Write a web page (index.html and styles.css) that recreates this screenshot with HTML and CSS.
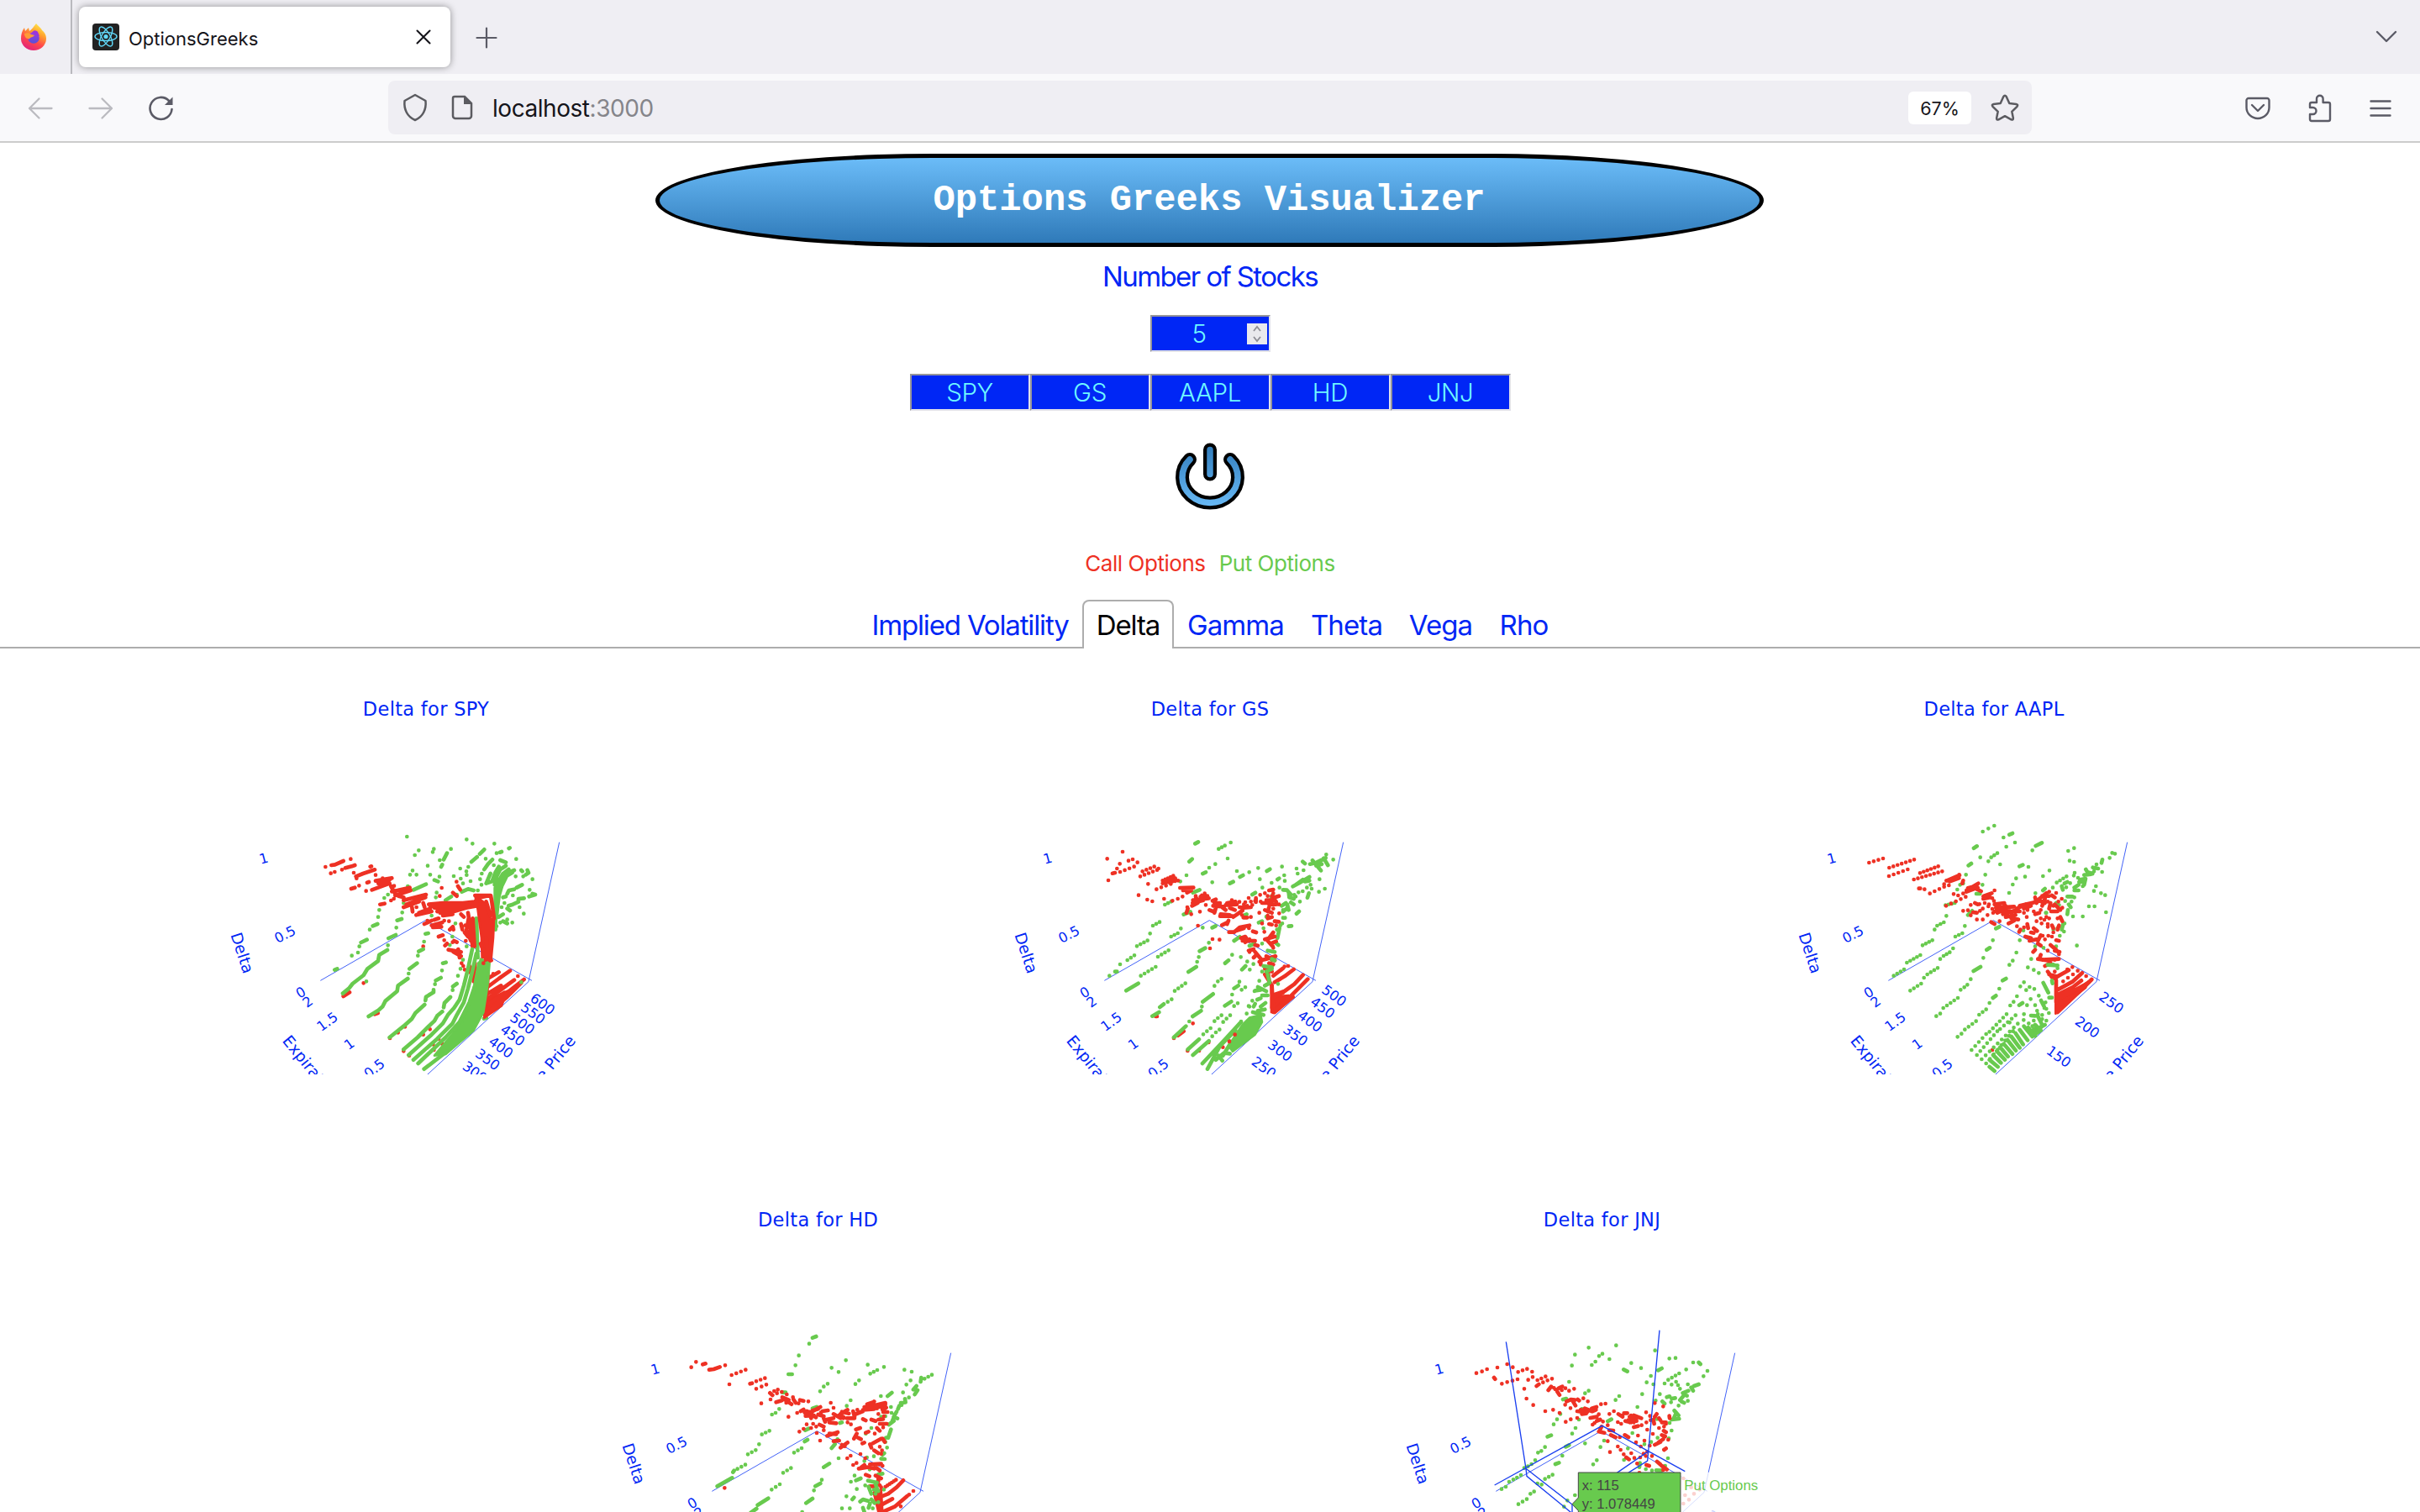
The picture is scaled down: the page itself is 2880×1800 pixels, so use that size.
FILE: index.html
```html
<!DOCTYPE html>
<html lang="en">
<head>
<meta charset="utf-8">
<title>OptionsGreeks</title>
<link rel="stylesheet" href="styles.css">
</head>
<body>
<div class="tabstrip">
  <div class="pinned">
    <svg width="34" height="34" viewBox="0 0 34 34">
      <defs>
        <linearGradient id="fx" x1=".8" y1="0" x2=".3" y2="1"><stop offset="0" stop-color="#fff44f"/><stop offset=".35" stop-color="#ffa02e"/><stop offset=".65" stop-color="#ff4a4a"/><stop offset="1" stop-color="#e0207e"/></linearGradient>
        <linearGradient id="fy" x1="0" y1="0" x2="0" y2="1"><stop offset="0" stop-color="#a03be0"/><stop offset="1" stop-color="#5650d8"/></linearGradient>
      </defs>
      <path fill="url(#fx)" d="M20 1c2 3 6 5 7 8 4 3 5 7 5 10a15 14 0 0 1-30 0c0-5 1-9 4-13l1 4 4-4 1 4c3-2 5-5 8-9z"/>
      <circle cx="17" cy="18" r="6.8" fill="url(#fy)"/>
      <path fill="#ff9a36" d="M6 13c3-1 6-1 8 1l4 1c-1 2-4 2-5 3s-1 2-3 1c-2 0-4-3-4-6z"/>
      <path fill="#9a35dc" d="M15 12c2-4 5-3 7-1l2 5-5-2z"/>
    </svg>
  </div>
  <div class="tab">
    <svg class="favicon" width="32" height="32" viewBox="0 0 32 32"><rect width="32" height="32" rx="4" fill="#222"/><g fill="none" stroke="#61dafb" stroke-width="1.4"><ellipse cx="16" cy="15.500" rx="13" ry="5"/><ellipse cx="16" cy="15.500" rx="13" ry="5" transform="rotate(60 16 15.500)"/><ellipse cx="16" cy="15.500" rx="13" ry="5" transform="rotate(120 16 15.500)"/></g><circle cx="16" cy="15.500" r="2.600" fill="#61dafb"/></svg>
    <span class="tab-title">OptionsGreeks</span>
    <svg width="18" height="18" viewBox="0 0 18 18" fill="none" stroke="#15141a" stroke-width="2" stroke-linecap="round"><path d="M1.500 1.500l15 15M16.500 1.500l-15 15"/></svg>
  </div>
  <svg class="newtab" width="26" height="26" viewBox="0 0 26 26" fill="none" stroke="#5b5b66" stroke-width="2.200" stroke-linecap="round"><path d="M13 1.500v23M1.500 13h23"/></svg>
  <svg class="alltabs" width="28" height="16" viewBox="0 0 28 16" fill="none" stroke="#5b5b66" stroke-width="2.400" stroke-linecap="round" stroke-linejoin="round"><path d="M3 2l11 11L25 2"/></svg>
</div>
<div class="toolbar">
  <div class="nav">
    <svg width="30" height="28" viewBox="0 0 30 28" fill="none" stroke="#bbbbc0" stroke-width="2.300" stroke-linecap="round" stroke-linejoin="round"><path d="M28.500 14H2M13.500 2.500L2 14l11.500 11.500"/></svg>
    <svg width="30" height="28" viewBox="0 0 30 28" fill="none" stroke="#bbbbc0" stroke-width="2.300" stroke-linecap="round" stroke-linejoin="round"><path d="M1.500 14H28M16.500 2.500L28 14 16.500 25.500"/></svg>
    <svg width="30" height="30" viewBox="0 0 30 30" fill="none" stroke="#5b5b66" stroke-width="2.600" stroke-linecap="round"><path d="M27.500 16A13 13 0 1 1 24 6"/><path d="M28.500 1.500v9.500h-9.500z" fill="#5b5b66" stroke="none"/></svg>
  </div>
  <div class="urlbar">
    <svg width="30" height="34" viewBox="0 0 30 34" fill="none" stroke="#5b5b60" stroke-width="2.500" stroke-linejoin="round"><path d="M15 2l12.500 7c1 10-3 19-12.500 23C5.500 28 1.500 19 2.500 9z"/></svg>
    <svg class="doc" width="26" height="30" viewBox="0 0 26 30"><path d="M4 2h12l8 8v15a3 3 0 0 1-3 3H5a3 3 0 0 1-3-3V4a2 2 0 0 1 2-2z" fill="none" stroke="#5b5b60" stroke-width="2.500"/><path d="M15 1.500V11h9.500z" fill="#5b5b60"/></svg>
    <span class="url">localhost<span class="port">:3000</span></span>
    <span class="zoom">67%</span>
    <svg width="34" height="32" viewBox="0 0 34 32" fill="none" stroke="#5b5b60" stroke-width="2.500" stroke-linejoin="round"><path d="M15.300 3q1.700-2.500 3.400 0l3.600 8 8.200 1q2.600.6 1 2.800l-6.200 6 1.600 8q0 2.500-2.400 1.500L17 26.200l-7.500 4.100q-2.400 1-2.400-1.500l1.600-8-6.200-6q-1.600-2.200 1-2.800l8.200-1z"/></svg>
  </div>
  <div class="actions">
    <svg width="30" height="28" viewBox="0 0 30 28" fill="none" stroke="#5b5b66" stroke-width="2.400" stroke-linecap="round" stroke-linejoin="round"><path d="M4 2h22a2.500 2.500 0 0 1 2.500 2.500V13a13.500 13 0 0 1-27 0V4.500A2.500 2.500 0 0 1 4 2z"/><path d="M8 10l7 7 7-7"/></svg>
    <svg width="28" height="34" viewBox="0 0 28 34" fill="none" stroke="#5b5b66" stroke-width="2.400" stroke-linejoin="round"><path d="M2 16v-4q0-2 2-2h6V5.500a3.800 3.800 0 0 1 7.600 0V10h6.400q2 0 2 2v18q0 2-2 2H4q-2 0-2-2v-6h3.500a4 4 0 0 0 0-8z"/></svg>
    <svg width="26" height="22" viewBox="0 0 26 22" stroke="#5b5b66" stroke-width="2.400" stroke-linecap="round"><path d="M1.500 2.500h23M1.500 11h23M1.500 19.500h23"/></svg>
  </div>
</div>

<main>
  <h1>Options Greeks Visualizer</h1>
  <div class="label">Number of Stocks</div>
  <div class="field count"><span>5</span>
    <svg class="spin" width="24" height="25" viewBox="0 0 24 25" fill="none" stroke="#8d8d95" stroke-width="1.800"><path d="M8 9l4-5 4 5M8 16l4 5 4-5"/></svg>
  </div>
  <div class="stocks"><div class="field">SPY</div><div class="field">GS</div><div class="field">AAPL</div><div class="field">HD</div><div class="field">JNJ</div></div>
  <svg class="power" width="84" height="80" viewBox="0 0 84 80" fill="none" stroke-linecap="round">
    <defs><linearGradient id="pw" gradientUnits="userSpaceOnUse" x1="0" y1="0" x2="0" y2="80"><stop offset="0" stop-color="#2f7ab9"/><stop offset="1" stop-color="#6bbcf8"/></linearGradient></defs>
    <path d="M18 20A33 30.500 0 1 0 66 20M42 8.500v29" stroke="#000" stroke-width="16"/>
    <path d="M18 20A33 30.500 0 1 0 66 20M42 8.500v29" stroke="url(#pw)" stroke-width="7.500"/>
  </svg>
  <div class="legend"><span class="call">Call Options</span><span class="put">Put Options</span></div>
  <div class="tabs">
    <span class="t1">Implied Volatility</span><span class="t2 active">Delta</span><span class="t3">Gamma</span><span class="t4">Theta</span><span class="t5">Vega</span><span class="t6">Rho</span>
  </div>
  <div class="charts">
    <figure><figcaption>Delta for SPY</figcaption><svg class="plot" data-stock="SPY" viewBox="0 0 2800 957"></svg></figure>
    <figure><figcaption>Delta for GS</figcaption><svg class="plot" data-stock="GS" viewBox="0 0 2800 957"></svg></figure>
    <figure><figcaption>Delta for AAPL</figcaption><svg class="plot" data-stock="AAPL" viewBox="0 0 2800 957"></svg></figure>
    <figure><figcaption>Delta for HD</figcaption><svg class="plot" data-stock="HD" viewBox="0 0 2800 957"></svg></figure>
    <figure><figcaption>Delta for JNJ</figcaption><svg class="plot" data-stock="JNJ" viewBox="0 0 2800 957"></svg></figure>
  </div>
</main>
<script src="charts.js"></script>
</body>
</html>
```
FILE: styles.css
```css
* { box-sizing: border-box; }
body { margin: 0; width: 2880px; height: 1800px; overflow: hidden; background: #fff; font-family: Inter, "Liberation Sans", sans-serif; color: #0026f5; }
svg { display: block; flex: none; }

.tabstrip { display: flex; align-items: center; height: 88px; background: #efeef3; }
.pinned { width: 86px; height: 88px; padding: 27px 0 0 23px; border-right: 2px solid #b9b9be; }
.tab { display: flex; align-items: center; width: 442px; height: 72px; margin-left: 8px; padding: 0 23px 0 16px; background: #fff; border-radius: 8px; box-shadow: 0 0 8px rgba(0, 0, 0, .4); }
.tab-title { flex: 1; margin-left: 11px; font-size: 22px; color: #15141a; padding-top: 3px; }
.newtab { margin: 2px 0 0 30px; }
.alltabs { margin-left: auto; margin-right: 26px; }

.toolbar { display: flex; align-items: center; height: 82px; padding-top: 2px; background: #f9f9fb; border-bottom: 2px solid #ccc; }
.nav { display: flex; align-items: center; gap: 42px; width: 462px; padding-left: 33px; }
.urlbar { display: flex; align-items: center; width: 1956px; height: 64px; margin-top: -2px; padding: 0 15px 0 17px; border-radius: 8px; background: #efeef3; }
.doc { margin-left: 28px; }
.url { flex: 1; margin-left: 23px; padding-top: 2px; font-size: 28px; letter-spacing: -.45px; color: #15141a; }
.port { color: #85858a; }
.zoom { width: 75px; height: 39px; margin-right: 23px; border-radius: 6px; background: #fff; color: #15141a; font-size: 21.500px; line-height: 41px; text-align: center; }
.actions { display: flex; align-items: center; gap: 45px; margin-left: auto; margin-right: 34px; }

main { display: flex; flex-direction: column; align-items: center; padding-top: 13px; }
h1 { width: 1319px; height: 111px; margin: 0 2px 0 0; border: 5px solid #000; border-radius: 25% / 50%; background: linear-gradient(#6bbcf8, #2f7ab9); color: #fff; font: bold 43.800px/101px "Liberation Mono", monospace; text-align: center; }
.label { height: 40px; margin-top: 15px; font-size: 33px; line-height: 40px; letter-spacing: -1.600px; }
.field { display: flex; align-items: center; justify-content: center; width: 143px; height: 44px; border: 2px solid; border-color: #95959a #e1e1e8 #e1e1e8 #95959a; background: #0026f5; color: #6ff8ff; font-size: 29.500px; font-weight: 350; letter-spacing: -.4px; }
.count { margin-top: 26px; padding-right: 2px; }
.count span { flex: 1; text-align: center; }
.spin { background: #e9e9ed; }
.stocks { display: flex; margin-top: 26px; }
.power { margin-top: 38px; }
.legend { display: flex; gap: 16px; height: 34px; margin-top: 47px; font-size: 26px; line-height: 34px; letter-spacing: -.45px; }
.call { color: #ee3124; }
.put { color: #68ca4e; }
.tabs { display: flex; justify-content: center; width: 100%; height: 58px; margin-top: 26px; border-bottom: 2px solid #adadad; font-size: 33px; line-height: 60px; text-align: center; letter-spacing: -1.150px; white-space: nowrap; }
.tabs span { height: 58px; }
.t1 { width: 267px; }
.t2 { width: 109px; }
.t3 { width: 147px; }
.t4 { width: 117px; }
.t5 { width: 107px; }
.t6 { width: 91px; }
.t3, .t4, .t5, .t6 { letter-spacing: -.9px; }
.active { border: 2px solid #adadad; border-bottom: 0; border-radius: 8px 8px 0 0; background: #fff; color: #000; line-height: 56px; }

.charts { display: flex; flex-wrap: wrap; justify-content: center; width: 2800px; }
figure { width: 933px; height: 608px; margin: 0; }
figcaption { height: 188px; padding-top: 55px; font: 22.500px/34px "DejaVu Sans", sans-serif; letter-spacing: .3px; text-align: center; }
.plot { width: 933.300px; height: 319px; overflow: hidden; }
.plot text { font-family: "DejaVu Sans", sans-serif; fill: #0026f5; }
.tick { font-size: 49px; text-anchor: middle; }
.axis-name { font-size: 56px; }
.axis { fill: none; stroke: #2c50f6; stroke-width: 2.700; }
.spike { fill: none; stroke: #1a3ff0; stroke-width: 4; }
.mark { stroke-width: 14; stroke-linecap: round; stroke-linejoin: round; fill: none; }
.mark-call { stroke: #ee3124; }
.mark-put { stroke: #68ca4e; }
.solid-call { fill: #ee3124; stroke: #ee3124; stroke-width: 8; stroke-linejoin: round; }
.solid-put { fill: #68ca4e; stroke: #68ca4e; stroke-width: 8; stroke-linejoin: round; }
.fade { fill: #fff; opacity: .78; }
.tip { fill: #68ca4e; stroke: #444; stroke-width: 3; }
.plot .tip-text { font: 50px "Liberation Sans", sans-serif; fill: #444; }
.plot .tip-name { font: 50.500px "Liberation Sans", sans-serif; fill: #68ca4e; }
```
FILE: charts.js
```js
// Marks are written as: "x,y" one point, "a-b-c" a dense run, "a:b:n" n evenly spaced points,
// and "#a-b-c" an area that is fully covered with points.
const DATA = {
  SPY: { dx: 628, dy: 0,
    ticks: [["600", 1187, 705], ["550", 1153, 738], ["500", 1115, 775], ["450", 1080, 817], ["400", 1038, 860], ["350", 991, 903], ["300", 945, 948]],
    layers: [
      ["put", `702,108 915,118 936,133 1014,133 859,152 744,157 730,174 798,152 794,163 845,167-833,190 819,192 828,208-824,216 776,212 722,229 713,244 736,244 785,244 818,251 800,263-813,268 892,222 914,232 915,245 869,249 894,258 929,267 902,275 978,154-962,170 952,181-932,198 921,216 1066,150-1069,148 1022,167 1034,164-1040,162 1092,188 983,187 1007,190-992,205-978,225 1012,210 1035,192-1055,200 1030,215-1018,235-1008,262 1000,240-985,275-1005,268 1055,212-1035,225-1022,250-1015,280 1085,228-1065,236-1048,258-1035,290-1028,330-1022,390 1078,236-1058,248-1040,285-1030,320-1020,400 1065,225-1045,240-1030,265-1020,300-1018,340 1018,290-1018,440 969,240 963,260 968,280 1110,228-1114,232 1132,228-1136,237-1126,244 1090,250 1117,250 1150,260 1113,280-1094,290 1085,296-1066,300-1060,312 1140,298 1150,312-1160,315-1138,322 1120,328-1100,330-1100,341-1080,350-1065,355 1045,325-1055,322 1080,318 1104,360 1119,383 1060,365-1070,372 1045,385-1030,395 1060,404 1078,415 1035,415 1022,428 1045,410-1060,418 1050,345 1040,360 770,278-725,298 705,285 940,300-920,295-898,305 880,315 860,322-840,335 808,308 805,325 955,300 634,315 621,327 603,370 599,395 597,420-580,427 569,440 559,476-538,486 532,500 527,522 505,533 453,580-444,584 690,345 685,379 683,402-667,407 664,433 662,459-636,471 634,496 790,390 778,453-768,455 763,483 855,495 875,418 864,465 915,500 985,755-977,758 950,400-955,540`],
      ["call", `411,216 432,210-445,208-475,195 501,188 430,239 444,234 470,226 482,220-505,214-516,210 512,237 571,215-575,214 520,250-545,240-587,226 522,257 590,245 503,294-516,290 531,283 560,272-566,270 556,302 577,298-640,275 590,266-648,256 600,275-640,262 615,257 645,285-660,312 656,284 648,304-668,300-712,290 660,318-715,300 672,320-690,325 606,350-622,347 645,336 655,330 690,335-770,315 700,350-768,325 690,360-745,340 720,360-722,376 735,388-790,375 745,380-785,365 736,360 760,345-765,360 780,350-830,345-940,345-960,325-1000,318 785,357-840,352-950,340 800,362-850,360-960,350 820,372-880,368-950,355 820,380-860,378-920,360 830,390-865,385 810,375-820,350 826,291 879,269 884,285-892,297 866,308-880,320 819,320 764,420-790,408 775,408 790,425-828,415 795,432-825,430 800,405-815,400 852,410 835,408 855,440-866,430-868,440 815,465-830,460 835,478 845,490-838,497 870,480-880,485 912,480 850,512-895,520 868,520-895,535 885,510-890,540 903,570 908,583 897,560 895,420-900,440 910,425 905,395-895,385 908,450-920,465 865,485 920,380-930,440-936,500 937,400-943,500 922,400-915,440-930,480 925,570-930,595 945,560-940,625 #945,318-980,345-1000,400-1013,402-1010,470-1003,545-970,540-968,470-955,370 945,318-1001,318-1005,340-1013,400 985,340-1000,390 985,555-1003,550 991,550-990,620-985,690 1030,592-990,615 1010,598 1070,587-1030,615-990,645 1085,620-1030,660-985,690 1038,640-985,672 1098,606 1120,618-1060,665-985,745 1050,665-990,710 #978,755-975,695-1060,660-1040,712 1110,630-1060,680-1010,722 475,678-497,664 547,631 587,742-598,738 670,808 695,787 641,828 690,874 710,890 784,796 760,815 815,830 795,850 828,848 798,870 760,500`],
      ["put", `632,513-603,530-599,552-561,580-547,603-508,633-495,650-473,668 557,625 760,510-744,518 741,533 738,560-711,580 708,597 705,615-670,640-667,660-625,695-615,715-600,728-565,750 841,557-830,560 827,586 823,612-805,622 802,635 797,655-797,664-770,680-768,693 765,708-732,738-720,758-690,785-640,825 902,548 893,580 884,605 880,633-866,643 865,656 857,681-836,702-833,718 828,733-810,748-800,766-780,785-740,825-690,868 935,510-920,580-905,640-890,690-870,720-848,745-830,775-790,815-708,888 950,525-935,590-920,650-905,700-880,745-865,775-810,830-725,905 960,560-945,640-925,700-890,770-840,825-742,918 #965,545-997,560-990,640-975,735-940,800-840,885-800,890-900,770-930,690 845,875-763,938 1110,628`],
      ["call", `965,490-985,540 995,520-998,550 985,470-990,530 975,560 983,548`]
    ] },
  GS: { dx: 619, dy: 0,
    ticks: [["500", 1214, 675], ["450", 1173, 718], ["400", 1128, 767], ["350", 1076, 817], ["300", 1021, 872], ["250", 963, 932]],
    layers: [
      ["put", `726,133-737,127 810,152:832,140:3 853,129 842,186 705,197-715,188 695,246 798,206 776,219 753,240-764,235 787,271 875,231 919,235 886,252-897,246 850,275-862,269 951,220 982,231-993,224 1036,215 957,260 999,273 1044,246 1046,266 1020,261-1026,257 966,290 930,315-941,308 673,268 742,298-718,308 1088,222 1113,228 1092,240 1110,197-1118,204 1194,172 1219,190 1170,260 1189,294 1168,305 1136,206-1160,200-1192,184 1145,193-1175,229 1158,212-1178,206 1185,185-1200,210 1075,286-1100,272-1134,252 1134,265-1118,268 1085,280-1110,262 1138,280 1142,294 1125,290 1110,303 1132,310-1127,326 1100,340 1095,307 1080,316 1040,298-1054,299-1068,315 1027,290 1060,306-1062,325-1078,330 1085,322 1050,345-1035,355 1055,350-1060,370 1040,376-1055,363 1078,350-1068,343 1040,370 1097,375-1088,383 1047,398 1060,428-1070,427 1037,418 1040,398 1027,435-1020,470 1030,425 1018,440 1023,495-1015,488 640,340:618,351:3 709,376-685,386 903,388-910,385 980,394 953,415-965,410 970,435 998,325 1003,315 753,433 787,433-799,427 575,426:599,413:3 565,454 518,499:556,479:4 484,549:509,532:3 458,564 440,590-447,590 420,605 675,436 640,465:664,453:3 593,537:631,514:4 532,605:585,573:5 480,658-523,632 775,487 742,517-762,506 739,538 733,555 730,573-702,591 858,530 833,560-845,550 889,538 865,480-885,466 920,498-938,490 912,554 934,563 893,583-906,570 921,583 985,515-1010,520 1010,540-1000,550 965,490`],
      ["call", `412,187 467,162 416,264 457,205 488,194 503,189 520,200 447,222 431,239-440,237 458,234:508,215:4 538,232:580,215:4 530,250:590,227:5 595,222 558,277 524,317 555,333 573,339 588,296 605,289:639,277:3 610,265:648,248:5 610,275:665,265:6 616,270:655,257:5 615,330 645,337 664,330 681,322 672,291-720,290 683,300-707,295 697,308-712,300 760,311 728,320-730,332 745,322-770,320 718,335-775,328 717,345-755,335 715,355-735,345 698,360 750,318-740,340 764,352 700,365-695,380 712,385 743,376 736,426 788,337-800,332 795,345-815,345 790,355-830,358 800,362-795,380 777,370-790,375 810,350-835,370 817,385-850,388 815,392-860,392 857,335-857,350 840,345-870,340 835,352-875,350 850,363-868,370 862,395-895,372 884,341 917,327 943,327-943,342 905,342 925,340 912,355 900,350 885,360-900,362-925,360 940,338 930,352 958,316 960,340 975,310 990,300-1005,297 1005,310 980,335-1010,335 965,345-1000,345 990,350-1015,350 1010,325-1025,320 1000,320-1015,340 985,320 1025,350 1005,365 990,360-985,375 1026,382 975,370-1000,380 955,380 925,395 898,397-912,397 893,388 845,408-840,420 822,424-840,415 985,400-1000,395 1010,410-1025,412 965,418 990,420-1000,422 1015,425 985,390 847,449-865,449-885,432-920,425 870,445-900,435 918,435 932,446-944,450 890,470-905,465-915,480 895,480-940,480 905,485-920,475 917,515-935,510 940,495-950,497 920,520 973,448 1005,450-990,470 975,475-1010,465 985,480-1003,500 995,490-1015,482 1005,505 935,540-945,530 940,520-965,550 960,565-960,550-980,545-1013,535 955,555 1000,545 980,535-1010,550 990,560-1005,565 975,580-1000,590 975,600-1000,640 985,585-990,620 788,474 813,476 779,507 1000,640-1005,735 1058,570:1045,572:2 1040,578-1005,605 1078,582-1045,607-1010,628 1111,602-1080,635-1045,660-1010,672 1128,617-1080,665-1010,735 1010,680-1040,665 #998,735-1000,680-1060,675 1075,680-1010,735 585,750-590,750 650,828 665,818-685,803 718,775 699,873 774,843 868,815 848,838 740,873 825,860`],
      ["put", `820,616 807,625 795,641 790,670-753,698 750,715 747,730-717,750 705,768 693,785-650,825 884,626 880,640-865,650 905,646 892,655 858,672 855,697-832,712 878,703 865,713 691,632:653,659:4 642,689 628,698 614,706-600,717 597,735-573,749 820,746 807,756 795,767 851,746 838,758 826,770 781,792 768,803 755,814 813,797 800,807 787,821 740,832-700,868 775,838-718,888 955,623 938,660 930,694 917,713 910,740 890,768 970,570-1000,575 980,590-1000,580 985,600-992,630 975,640-990,632 965,590 1000,545-1010,550 950,645-980,660 940,658-960,655 965,675-985,675 948,690-960,685 977,702-960,715 940,705-935,715 920,715 975,725-950,730 932,735-970,745 1022,634 #895,780-920,755-960,745-965,770-940,815-860,875-845,855 910,740 890,770-835,830-752,918 870,800-815,855-770,938 850,850-825,890 810,890-823,908 800,905-830,880-850,883 920,770`],
      ["call", `868,815 848,840 1000,640-1000,720`]
    ] },
  AAPL: { dx: 640, dy: 0,
    ticks: [["250", 1190, 700], ["200", 1104, 788], ["150", 1002, 893]],
    layers: [
      ["put", `718,90 738,79 759,69 792,111 813,101-824,96 833,129 802,144 895,157 907,141-929,130 686,149-697,142 709,182 748,182:770,167:3 738,196 667,211-677,204 780,207 849,214-861,209 881,216 1023,159 1044,149 1028,194 1044,198 956,229 933,249 869,251 837,257 825,279 812,309 727,244 658,244 648,275 637,280 627,297 717,280 695,312-708,312 585,353:618,345:4 588,391 555,426:579,414:3 546,440 503,496:538,478:4 447,558:495,531:5 400,605:437,582:4 654,427 620,465:645,453:3 612,507 578,534:600,521:3 566,545 557,577:520,600:4 508,612 459,658:498,633:4 680,373-665,388 777,430-765,436 754,478 743,505-732,512 720,541 710,573-685,588 675,617 663,637 639,655:652,646:2 629,684:577,720:5 566,740 552,749 838,522 825,551 813,566 801,615-789,622 777,651 765,676-754,684 742,702 730,725:705,744:3 694,767:654,797:4 642,812 628,823 850,478 891,545 1180,166 1190,169 1171,184 1145,190-1142,202 1124,207 1144,234 1111,218-1130,222 1086,225-1092,235-1110,240 1115,232 1080,245-1105,242 1065,262-1085,258-1080,280 1062,270-1080,270 1060,280-1045,290 1045,300-1060,300 1075,285 1046,237 1043,247 1058,255 1017,250:982,272:4 1020,270-1010,275 1030,274 1000,285-1004,298 1016,289 1122,285 1115,302 1140,310 1155,317 1097,357 1117,357 1158,378 1075,393 1054,497 1040,393 1020,322-1038,322 1045,325 1012,338 1035,340 1025,350-1032,360 1022,370-1020,385 985,350 968,290 940,294-933,300 906,310 945,380 1005,420-1000,440 985,435 1010,418 1008,447 993,462 970,440 905,500 935,505 980,345-990,352 980,500 879,575 900,584 918,595 943,380 863,443`],
      ["call", `312,201:362,186:4 384,219:473,190:7 383,249:450,225:5 494,238:559,214:6 472,261:573,232:8 490,293-495,293 510,296 529,311:580,287:4 597,282 580,278 590,265-635,246 600,268-633,256 588,265-610,262 634,244 648,265-645,275 614,313 630,318 587,355:657,323:5 648,311 660,300-702,275 660,305-700,290 665,292-690,285 685,290-712,303 722,320-750,310 720,330-745,325 760,300 725,345 752,328 758,338 720,322 690,345-700,350 675,352 740,350 706,349 648,373 665,371 675,389 683,378-697,380 708,373 718,365 738,357 752,366 697,404 718,404 735,388 755,380 748,413-760,420 778,410 760,350-795,345 765,362-830,358 770,380-800,365 762,375-850,375 790,385-840,370 800,395-835,388 810,418-830,408 820,400-845,404 795,350-820,380 850,355-915,340 865,365-890,355 840,365-870,350 905,325-910,345 915,335-940,345 920,330-945,310 955,305 980,309 930,320-955,320 965,318-975,325 940,330-930,355 950,340 1000,330 988,340 975,350-995,370 962,375-985,375 1002,362 970,355 960,345-955,365 925,370 900,375 905,385-920,380 875,395 865,380 878,370 910,410 925,400 938,405 945,395 955,400 950,420 928,418 995,395-1002,410 985,400 990,425-985,440 970,435-965,425 950,430 840,428 852,440-848,448 865,432 877,420-880,435 900,435-912,445 890,450-900,452 870,465-890,470 885,480-910,475 925,460-915,480 932,462 952,462 940,475 965,465 970,450 980,478-990,480 915,490-925,497 960,495-980,512 950,515 975,515-992,520 990,528 905,512-898,520 925,530-920,545 915,545-950,550 930,548-990,545 975,548 940,570-960,560 950,590-965,610 955,600-985,608 975,590 970,615 980,620-980,700 1038,574:1020,582:2 1025,585-985,607 1057,587 1040,600 1022,612 1005,625 1073,595-1040,625-985,655 1087,606 1070,622-1040,645-990,670 1107,618-1070,655-985,735 1095,630-985,690 #978,740-978,705-1000,685-1055,655-1095,625-1085,648-1050,675 752,870 990,672-1040,650 1030,652-990,680`],
      ["put", `950,566-985,568 985,578 970,565 934,630-952,665 965,622-967,632 965,683-955,683 926,693-937,715 918,676 942,700 889,688 905,710 876,710 848,710-860,702 828,698 816,711 840,678 852,643 865,628 885,645 873,656 902,652 803,742:742,805:6 835,746:780,795:5 730,813:678,870:5 814,772 770,803:697,888:7 843,776:714,903:10 865,742 826,803:730,918:8 864,763 890,747-905,748 900,765 882,775 895,785 912,730 915,742 930,745 938,720 945,723 954,738 930,760 925,770 945,765 940,780-925,788 900,795 905,780-925,800-910,810 915,750-930,780-920,800 #895,820-905,790-925,790 865,785-895,822 850,798-878,835 835,810-862,850 820,822-850,862 806,834-836,872 793,848-824,884 780,860-808,893 768,874-797,905 755,888-783,916 742,905-772,930 742,930-760,945 880,790-905,820`]
    ] },
  HD: { dx: 640, dy: -24,
    ticks: [["400", 1190, 732]],
    layers: [
      ["put", `753,93-740,98 728,119 691,161 679,196 654,228-667,228 859,178 808,205 833,220 794,262 780,272 767,289 937,194 946,226:971,213:3 995,202 906,250 893,263 876,321 862,341 1068,212 1094,219 1090,250 1075,265 1063,293 1023,294-1008,306 984,306 1166,230:1140,244:3 1128,240-1126,255 1111,270-1100,283 1115,285-1105,300 1084,311 1070,316-1072,328-1055,330 1050,340-1045,352 1058,338 1040,362-1030,380-1043,386 1035,370-1025,395 1020,345 1022,366 1030,395-1012,408 1020,425-1010,455 1002,455 1006,490 1000,470 996,510-990,515 985,530-998,531 1000,378 985,380 950,420 930,440 621,352 608,366 595,372 559,443:586,430:3 549,478 509,514:537,499:3 500,551:472,566:3 460,572-456,578 453,598-400,628 644,293-632,293 727,422-714,428 722,462-712,468 674,508:701,492:3 635,580:663,563:3 594,640:623,621:3 582,671-544,695 540,708-520,722 845,400-838,402 740,350-755,345 820,478-808,492 829,460 833,528 800,547-780,560 773,605 768,618-750,628 745,643 740,672-717,688 703,720 890,590 877,612 895,607-912,600 898,638 928,625 944,568 959,521 925,538 934,525 968,550 990,583-975,585 861,664 888,668-882,675 845,707 873,707`],
      ["call", `307,203 324,184 348,193-358,190 371,212-387,210-409,202 428,196 451,231:501,212:4 443,264 517,262-524,260 539,253:570,242:3 539,280 558,272 575,265 588,295-597,303 603,288 616,283 590,318 613,296 630,291 648,300 610,328-630,322 632,310-655,320 636,315-665,335 646,330 670,310 672,318-680,330 690,332 695,320-708,323 725,325 557,332 654,380 805,330 815,348 685,366 698,360-708,354 712,365-735,362 722,370-768,345 715,377-745,375 740,358-760,352 730,370-735,385 720,360-752,382 760,372-780,378 775,360-795,357 770,365 780,385-785,398 790,390-815,385 800,400-825,403 815,370-840,385 840,370-865,355 845,362-870,368 835,375-850,380 862,385-890,385 865,400 877,407 850,385 885,360-890,380 890,372-920,360 900,355 925,345-1000,335 920,355-960,352 935,335-955,328 945,345-985,345 960,340-1000,330 970,350 1003,347-990,355 985,345-1000,348 950,340-960,325 975,370 1008,363-992,363 995,378 920,388-930,393 950,390-965,395 975,390-992,388 980,405-1005,405 970,420-980,430 992,418 719,407 742,405 693,433 708,423 735,420 753,415 765,408-780,415 780,428 755,438 767,465 792,448-830,435 800,440-825,442 815,467-835,465 840,490-865,472 845,480-855,485 895,425-910,420 898,440-888,458 903,455-913,460 918,475-925,472 930,437-940,433 962,440 945,478-950,490 955,475-985,458 990,458-998,470 960,500-975,510 980,487 988,500 985,512 864,528 876,519 911,513 928,528 885,552 897,545 905,565-935,560 915,560-925,552 940,560-960,565 945,550-985,548 965,560-980,572 990,555 930,587-943,592 965,590-985,600 975,600-975,610 968,615-980,625 945,628-960,628 985,632 960,640-975,645 #958,650-985,640-990,720-975,720 1038,605:1000,630:6 1064,607-1040,632-1010,655-985,665 1025,673-985,695 1100,645:1085,658:2 1078,663-1035,700-990,720 1055,700 426,634`],
      ["put", `938,608-970,615 965,620-970,635 960,640-975,645 940,630-950,655 965,655 910,683-920,675-938,680 950,675-962,688 975,685 945,690-940,705 920,705-925,720 955,707 995,640`]
    ] },
  JNJ: { dx: 628, dy: -24,
    ticks: [["220", 1190, 728]],
    layers: [
      ["put", `724,133 675,158 664,197 822,125 735,195 748,183 761,163 773,155 798,174 876,188 849,211-862,218 911,206 961,143 1012,172 1034,170 1097,186 1117,186-1123,192 1148,216 1134,235 1072,211 972,214-985,207 946,234 931,257 955,264 915,299 978,299 995,261 1008,248:1047,225:4 1020,265 1036,255 1043,267 1050,280 1078,264 1090,275-1097,287 1100,270-1117,264 1080,287-1060,295 1067,300-1050,320 1075,305 1055,325-1065,330 1078,323 1045,340 1003,310-1013,307 1020,315-1033,313 1018,328 987,325-995,333 963,322 1030,358-1045,375 1035,370-1028,385 1020,390-1047,387 1013,402 1020,429 1010,457 970,455 968,388 947,470 923,478 880,438 898,345 833,306 820,320 724,287 711,296 654,255 644,315-632,318 700,352 623,370 611,389 599,407 590,446-577,451 689,390 677,420 665,440 654,481-642,487 711,475 630,519 618,544-605,549 568,488 555,502 543,508 533,535 520,549 507,557 494,563 482,588 468,597 455,604 440,612 428,630 413,638 595,587:568,602:3 556,622 541,618 529,647 516,655 503,674 488,683 473,692 753,535 740,550 766,488 779,465 805,389-792,396 864,493 850,534 1007,528 907,545-905,560 928,567 950,572 965,571-985,572 997,555 675,660 648,679 636,701`],
      ["call", `323,224 343,218 361,210 398,204 433,192 453,203 386,240-390,245 414,262 433,256 452,251 470,246 472,220 488,214 504,209 522,219 508,248 524,238 541,249 555,243 570,236 538,270-546,264 561,257 577,250 593,244 494,280 502,315 526,338 569,360 597,355 620,366 580,285-590,272 600,277 612,290-620,302 605,282 617,278-630,272 628,285 641,278 654,287 672,280 645,325-657,320 640,337 660,318-675,320 668,325-677,340 685,318-690,322 705,314 721,325 659,349 683,360-700,362 695,355-720,362 700,370-715,368 710,350-735,360 735,350-752,345 738,360-750,355 768,335 784,333 760,371 730,384-753,380 642,398 660,389 683,384 738,408 745,402 753,395-765,390 775,397 792,410 770,415-765,425 760,433-780,437 797,428-812,429 792,467 803,445-820,453 835,453 853,445-866,453 828,486 838,498 800,506 798,370 814,360 830,370-845,380 850,367-862,367 828,399 840,405 855,395-875,400 845,375 870,380-895,385 865,392-895,395 885,375-912,385 882,395 885,417-900,413 913,410 930,400 945,392 943,377 929,364 960,380-967,370 975,385-980,392 990,343 960,331 955,390-958,405 985,400-1000,400 993,415 975,420 1012,377-1013,385 992,430-1000,435 933,426 953,441 900,447 985,445-997,450 975,470-990,460 1008,462 960,480-980,470 993,498-1000,493 942,483 923,465 893,471 910,486 849,514 858,525-868,532 876,510 887,527 908,525 920,512 928,520 933,505 950,520 968,540-980,550 985,555-1003,568 990,570 930,552-940,555 897,547 905,580 1000,405 890,380-885,400 875,375-870,400 1062,600 1090,632 1068,660 1100,655 1082,676 1062,690 1120,640`]
    ] }
};
const COMMON = [["1", 190, 185, -15], ["0.5", 266, 456, -27], ["0", 322, 664, -30], ["2", 347, 697, -36], ["1.5", 417, 768, -36], ["1", 495, 848, -36], ["0.5", 585, 935, -38]];

const text = (s, x, y, r) => `<text class="tick" transform="translate(${x} ${y}) rotate(${r})" y="18">${s}</text>`;

function marks(kind, spec) {
  let d = "", areas = "";
  for (const token of spec.trim().split(/\s+/)) {
    if (token[0] === "#") areas += `<polygon class="solid-${kind}" points="${token.slice(1).replace(/-/g, " ")}"/>`;
    else if (token.includes(":")) {
      const [a, b, n] = token.split(":"), [x0, y0] = a.split(",").map(Number), [x1, y1] = b.split(",").map(Number);
      for (let i = 0; i < n; i++) {
        const t = n > 1 ? i / (n - 1) : 0;
        d += `M${(x0 + (x1 - x0) * t).toFixed(1)} ${(y0 + (y1 - y0) * t).toFixed(1)}h.1`;
      }
    } else {
      const p = token.split("-");
      d += "M" + p.join("L") + (p.length === 1 ? "h.1" : "");
    }
  }
  return areas + `<path class="mark mark-${kind}" d="${d}"/>`;
}

for (const svg of document.querySelectorAll(".plot")) {
  const c = DATA[svg.dataset.stock];
  let out = `<g transform="translate(628 0)"><path class="axis" d="M393 622L768 407L1148 622M1246 128L1136 626L765 967"/></g>`;
  out += `<g transform="translate(${c.dx} ${c.dy})">` + c.layers.map(l => marks(l[0], l[1])).join("") + `</g>`;
  out += `<g transform="translate(628 0)">` + COMMON.map(l => text(...l)).join("") + c.ticks.map(([s, x, y]) => text(s, x, y, 36)).join("") +
    `<text class="axis-name" transform="translate(72 458) rotate(72)">Delta</text>
     <text class="axis-name" transform="translate(255 838) rotate(51)">Expiration</text>
     <text class="axis-name" text-anchor="end" transform="translate(1307 838) rotate(-51)">Strike Price</text></g>`;
  if (svg.dataset.stock === "JNJ") {
    out += `<g transform="translate(628 -24)">
      <path class="spike" d="M429 112L500 565L503 592L665 725M500 565L665 693V730M388 624L772 412L1068 575M977 71L934 537L865 580M934 505L825 580"/>
      <rect class="fade" x="1052" y="578" width="296" height="200"/>
      <path class="tip" d="M687 579H1052V800H687V715L665 692L687 669Z"/>
      <text class="tip-text" x="700" y="642">x: 115</text><text class="tip-text" x="700" y="707">y: 1.078449</text>
      <text class="tip-name" x="1065" y="642">Put Options</text></g>`;
  }
  svg.innerHTML = out;
}
```
